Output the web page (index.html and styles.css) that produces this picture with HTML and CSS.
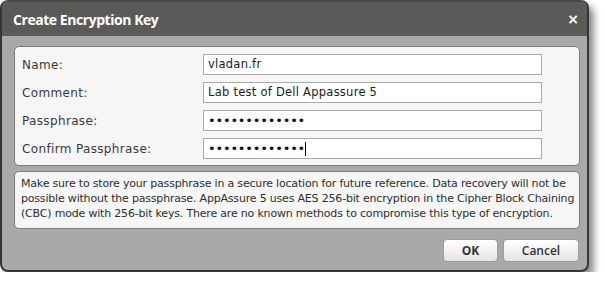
FILE: index.html
```html
<!DOCTYPE html>
<html>
<head>
<meta charset="utf-8">
<link rel="stylesheet" href="styles.css">
</head>
<body>
<div class="dialog">
  <div class="titlebar">
    <span class="title">Create Encryption Key</span>
    <span class="close">×</span>
  </div>
  <div class="content">
    <div class="panel form">
      <div class="row"><label>Name:</label><div class="input">vladan.fr</div></div>
      <div class="row"><label>Comment:</label><div class="input">Lab test of Dell Appassure 5</div></div>
      <div class="row"><label>Passphrase:</label><div class="input dots">•••••••••••••</div></div>
      <div class="row"><label>Confirm Passphrase:</label><div class="input dots">•••••••••••••<span class="caret"></span></div></div>
    </div>
    <div class="panel info">Make sure to store your passphrase in a secure location for future reference. Data recovery will not be<br>possible without the passphrase. AppAssure 5 uses AES 256-bit encryption in the Cipher Block Chaining<br>(CBC) mode with 256-bit keys. There are no known methods to compromise this type of encryption.</div>
    <div class="buttons">
      <button class="btn ok">OK</button>
      <button class="btn cancel">Cancel</button>
    </div>
  </div>
</div>
</body>
</html>
```
FILE: styles.css
```css
* { box-sizing: border-box; }
html, body { margin: 0; padding: 0; background: #ffffff; }
body { font-family: "DejaVu Sans", Verdana, sans-serif; }

.dialog {
  width: 589px;
  height: 272px;
  background: #a9a8aa;
  border: 2px solid #363636;
  border-top-color: #4a4b49;
  border-radius: 8px;
  box-shadow: 5px 6px 7px rgba(0,0,0,0.45);
  overflow: hidden;
}

.titlebar {
  height: 34px;
  background: #5a5b58;
  display: flex;
  align-items: center;
  justify-content: space-between;
  padding: 0 8px 0 11px;
  color: #ffffff;
}
.title {
  font-family: "Open Sans", sans-serif;
  font-weight: 700;
  font-size: 14px;
  letter-spacing: -0.45px;
}
.close {
  font-family: "DejaVu Sans", sans-serif;
  font-weight: 700;
  font-size: 14px;
}

.content {
  padding: 10px 7px 0 12px;
  display: flex;
  flex-direction: column;
}

.panel {
  background: #f6f6f6;
  border: 1px solid #7b7b7b;
  border-radius: 5px;
}

.form {
  height: 120px;
  padding: 7px 0 0 7px;
  display: flex;
  flex-direction: column;
  gap: 7px;
}
.row {
  display: flex;
  align-items: center;
  height: 21px;
}
.row label {
  width: 181px;
  font-size: 12px;
  letter-spacing: 0.35px;
  color: #3a3a3a;
}
.input {
  width: 339px;
  height: 21px;
  background: #ffffff;
  border: 1px solid #a9a9a9;
  padding: 0 4px;
  font-size: 11.5px;
  letter-spacing: 0.25px;
  color: #1a1a1a;
  line-height: 19px;
  display: flex;
  align-items: center;
}
.dots {
  font-size: 13px;
  letter-spacing: -0.2px;
  color: #111;
}
.caret {
  display: inline-block;
  width: 1px;
  height: 14px;
  background: #000;
  margin-left: 0px;
}

.info {
  margin-top: 5px;
  height: 58px;
  padding: 4px 2px 4px 6px;
  font-size: 11px;
  line-height: 15px;
  color: #2e2e2e;
  letter-spacing: -0.19px;
  white-space: nowrap;
  overflow: hidden;
}

.buttons {
  display: flex;
  justify-content: flex-end;
  gap: 5px;
  margin-top: 10px;
  padding-right: 1px;
}
.btn {
  height: 23px;
  border: 1px solid #9c9c9c;
  border-radius: 4px;
  background: linear-gradient(#ffffff, #e4e4e4);
  font-family: "Open Sans", sans-serif;
  font-size: 12px;
  color: #333;
  padding: 0;
}
.ok { width: 55px; font-weight: 700; }
.cancel { width: 76px; font-weight: 600; }
```
